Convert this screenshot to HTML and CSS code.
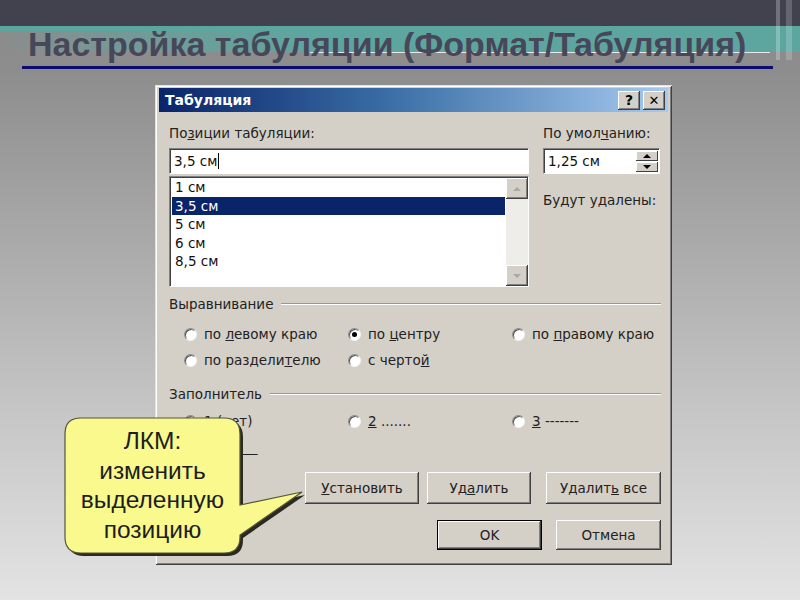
FILE: index.html
```html
<!DOCTYPE html>
<html lang="ru">
<head>
<meta charset="UTF-8">
<title>Настройка табуляции</title>
<link rel="stylesheet" href="styles.css">
</head>
<body>
<div class="slide">
    <div class="header">
        <h1 class="slide-title">Настройка табуляции (Формат/Табуляция)</h1>
    </div>

    <!-- Word dialog -->
    <div class="dialog">
        <div class="titlebar">
            <span class="caption">Табуляция</span>
            <div class="tb-buttons">
                <span class="tb-btn">?</span>
                <span class="tb-btn close">✕</span>
            </div>
        </div>

        <div class="dlg-body">
            <div class="top-grid">
                <div class="col-left">
                    <div class="lbl">По<u>з</u>иции табуляции:</div>
                    <div class="edit">3,5 см<span class="caret"></span></div>
                    <div class="listbox">
                        <ul class="items">
                            <li>1 см</li>
                            <li class="sel">3,5 см</li>
                            <li>5 см</li>
                            <li>6 см</li>
                            <li>8,5 см</li>
                        </ul>
                        <div class="vscroll">
                            <span class="sb-btn"><i class="arr up"></i></span>
                            <span class="sb-track"></span>
                            <span class="sb-btn"><i class="arr down"></i></span>
                        </div>
                    </div>
                </div>
                <div class="col-right">
                    <div class="lbl">По умол<u>ч</u>анию:</div>
                    <div class="edit spin">
                        <span>1,25 см</span>
                        <span class="spin-btns">
                            <span class="sp-btn"><i class="arr up dark"></i></span>
                            <span class="sp-btn"><i class="arr down dark"></i></span>
                        </span>
                    </div>
                    <div class="lbl removed">Будут удалены:</div>
                </div>
            </div>

            <div class="group-head">Выравнивание</div>
            <div class="radio-grid align">
                <label class="radio"><span class="dot"></span><span>по <u>л</u>евому краю</span></label>
                <label class="radio"><span class="dot on"></span><span>по <u>ц</u>ентру</span></label>
                <label class="radio"><span class="dot"></span><span>по <u>п</u>равому краю</span></label>
                <label class="radio"><span class="dot"></span><span>по раздели<u>т</u>елю</span></label>
                <label class="radio"><span class="dot"></span><span>с черто<u>й</u></span></label>
            </div>

            <div class="group-head fill-head">Заполнитель</div>
            <div class="radio-grid fill">
                <label class="radio"><span class="dot on"></span><span><u>1</u> (нет)</span></label>
                <label class="radio"><span class="dot"></span><span><u>2</u> .......</span></label>
                <label class="radio"><span class="dot"></span><span><u>3</u> -------</span></label>
                <label class="radio"><span class="dot"></span><span><u>4</u> ______</span></label>
            </div>

            <div class="btn-row first">
                <button class="btn w114"><u>У</u>становить</button>
                <button class="btn w104">Уд<u>а</u>лить</button>
                <button class="btn w115 spaced">Удалит<u>ь</u> все</button>
            </div>
            <div class="btn-row second">
                <button class="btn default w105">OK</button>
                <button class="btn w105">Отмена</button>
            </div>
        </div>
    </div>

    <!-- callout over the dialog -->
    <div class="callout">
        <svg class="callout-shape" width="250" height="150" viewBox="0 0 250 150">
            <path d="M21 5 H164 Q180 5 180 21 V92 L242 79 L180 122 V124 Q180 140 164 140 H21 Q5 140 5 124 V21 Q5 5 21 5 Z"
                  transform="translate(3,3)" fill="#2a2a22"/>
            <path d="M21 5 H164 Q180 5 180 21 V92 L242 79 L180 122 V124 Q180 140 164 140 H21 Q5 140 5 124 V21 Q5 5 21 5 Z"
                  fill="#f9f98e" stroke="#55553a" stroke-width="1.2"/>
        </svg>
        <div class="callout-text">ЛКМ:<br>изменить<br>выделенную<br>позицию</div>
    </div>
</div>
</body>
</html>
```

FILE: styles.css
```css
body {
  margin: 0;
  width: 800px;
  height: 600px;
  overflow: hidden;
  background: linear-gradient(#8a8a8a 0, #8d8d8d 70px, #c4c4c4 400px, #e3e3e3 600px);
  font-family: "DejaVu Sans", sans-serif;
  color: #111;
}

.slide {
  position: relative;
  height: 600px;
}

/* slide header */
.header {
  overflow: hidden;
  background:
    linear-gradient(rgba(255, 255, 255, 0.25), rgba(255, 255, 255, 0.25)) 776px 0 / 4px 60px no-repeat,
    linear-gradient(rgba(255, 255, 255, 0.18), rgba(255, 255, 255, 0.18)) 786px 0 / 6px 60px no-repeat,
    linear-gradient(#42424f, #42424f) 0 0 / 100% 26px no-repeat,
    linear-gradient(#5da6a0, #5da6a0) 0 26px / 100% 5px no-repeat,
    linear-gradient(to right, rgba(93, 166, 160, 0) 0, rgba(93, 166, 160, 0.6) 150px, #5da6a0 320px) 0 31px / 100% 21px no-repeat,
    linear-gradient(#e8e8e8, #e8e8e8) 310px 52px / 460px 1px no-repeat;
}
.slide-title {
  margin: 26px 27px 0 22px;
  padding: 0 0 4px 6px;
  font-family: "Liberation Sans", Arial, sans-serif;
  font-size: 34px;
  line-height: 36px;
  font-weight: bold;
  color: #474759;
  white-space: nowrap;
  border-bottom: 3px solid #0c0c6e;
}

/* dialog window */
.dialog {
  box-sizing: border-box;
  width: 517px;
  height: 480px;
  margin: 16px 0 0 155px;
  padding: 3px 4px;
  background: #d4d0c8;
  box-shadow: inset 1px 1px #e4e2dc, inset -1px -1px #404040, inset 2px 2px #fff, inset -2px -2px #808080;
  font-size: 13.5px;
}
.titlebar {
  height: 24px;
  display: flex;
  align-items: center;
  justify-content: space-between;
  padding: 0 3px 0 6px;
  background: linear-gradient(to right, #0a246a, #3a6ea5 45%, #a6caf0);
}
.caption {
  color: #fff;
  font-weight: bold;
  font-size: 14px;
}
.tb-buttons {
  display: flex;
  gap: 3px;
}
.tb-btn {
  width: 22px;
  height: 19px;
  box-sizing: border-box;
  background: #d4d0c8;
  box-shadow: inset -1px -1px #404040, inset 1px 1px #fff, inset -2px -2px #808080;
  display: flex;
  align-items: center;
  justify-content: center;
  font-weight: bold;
  font-size: 14px;
  color: #000;
}
.tb-btn.close {
  font-size: 13px;
}

.dlg-body {
  padding: 13px 7px 0 10px;
}
.top-grid {
  display: grid;
  grid-template-columns: 360px 117px;
  column-gap: 14px;
}
.lbl {
  line-height: 16px;
  margin-bottom: 7px;
  color: #222;
  white-space: nowrap;
}
.lbl.removed {
  margin-top: 18px;
}
.edit {
  box-sizing: border-box;
  height: 26px;
  padding: 0 4px;
  line-height: 24px;
  background: #fff;
  border: 1px solid;
  border-color: #808080 #fff #fff #808080;
  box-shadow: inset 1px 1px #404040;
  display: flex;
  align-items: center;
}
.caret {
  display: inline-block;
  width: 1px;
  height: 16px;
  background: #000;
  margin-left: 1px;
}
.edit.spin {
  justify-content: space-between;
  padding-right: 1px;
}
.spin-btns {
  display: flex;
  flex-direction: column;
  gap: 1px;
}
.sp-btn {
  width: 22px;
  height: 10px;
  background: #d4d0c8;
  box-shadow: inset -1px -1px #404040, inset 1px 1px #fff;
  display: flex;
  align-items: center;
  justify-content: center;
}

.listbox {
  box-sizing: border-box;
  margin-top: 2px;
  height: 111px;
  display: flex;
  background: #fff;
  border: 1px solid;
  border-color: #808080 #fff #fff #808080;
  box-shadow: inset 1px 1px #404040;
  padding: 1px 0 0 1px;
}
.items {
  flex: 1;
  list-style: none;
  margin: 0;
  padding: 0 1px 0 1px;
}
.items li {
  height: 18.5px;
  line-height: 18.5px;
  padding-left: 3px;
}
.items li.sel {
  background: #0a246a;
  color: #fff;
}
.vscroll {
  width: 22px;
  display: flex;
  flex-direction: column;
  background: #eeede9;
}
.sb-track {
  flex: 1;
}
.sb-btn {
  height: 21px;
  background: #d4d0c8;
  box-shadow: inset -1px -1px #404040, inset 1px 1px #fff, inset -2px -2px #808080;
  display: flex;
  align-items: center;
  justify-content: center;
}
.arr {
  width: 0;
  height: 0;
  border-left: 4px solid transparent;
  border-right: 4px solid transparent;
}
.arr.up {
  border-bottom: 4px solid #a8a8a8;
}
.arr.down {
  border-top: 4px solid #a8a8a8;
}
.arr.up.dark {
  border-bottom-color: #000;
}
.arr.down.dark {
  border-top-color: #000;
}

/* groups */
.group-head {
  display: flex;
  align-items: center;
  gap: 8px;
  margin-top: 9px;
  line-height: 16px;
  color: #222;
}
.group-head::after {
  content: "";
  flex: 1;
  border-top: 1px solid #9a978f;
  border-bottom: 1px solid #fff;
}
.fill-head {
  margin-top: 13px;
}
.radio-grid {
  display: grid;
  grid-template-columns: 164px 164px 1fr;
  grid-auto-rows: 26px;
  padding-left: 15px;
  margin-top: 9px;
}
.radio-grid.fill {
  margin-top: 6px;
}
.radio {
  display: flex;
  align-items: center;
  gap: 7px;
  color: #222;
  white-space: nowrap;
}
.dot {
  position: relative;
  box-sizing: border-box;
  flex: none;
  width: 13px;
  height: 13px;
  border-radius: 50%;
  background: #fff;
  border: 1px solid;
  border-color: #8a8a8a #f4f4f4 #f4f4f4 #8a8a8a;
  box-shadow: inset 1px 1px #505050;
}
.dot.on::after {
  content: "";
  position: absolute;
  left: 3px;
  top: 3px;
  width: 5px;
  height: 5px;
  border-radius: 50%;
  background: #000;
}

/* buttons */
.btn-row {
  display: flex;
  justify-content: flex-end;
  gap: 8px;
}
.btn-row.first {
  margin-top: 12px;
}
.btn-row.second {
  margin-top: 16px;
  gap: 14px;
}
.btn {
  box-sizing: border-box;
  height: 32px;
  padding: 0;
  border: none;
  background: #d4d0c8;
  font-family: "DejaVu Sans", sans-serif;
  font-size: 13.5px;
  color: #222;
  box-shadow: inset -1px -1px #404040, inset 1px 1px #fff, inset -2px -2px #808080;
}
.btn-row.second .btn {
  height: 30px;
}
.btn.default {
  border: 1px solid #000;
}
.btn.spaced {
  margin-left: 7px;
}
.w104 { width: 104px; }
.w105 { width: 105px; }
.w114 { width: 114px; }
.w115 { width: 115px; }

/* callout */
.callout {
  position: absolute;
  left: 60px;
  top: 413px;
  width: 250px;
  height: 150px;
}
.callout-shape {
  display: block;
}
.callout-text {
  position: absolute;
  left: 5px;
  top: 13px;
  width: 175px;
  text-align: center;
  font-family: "Liberation Sans", Arial, sans-serif;
  font-size: 24.5px;
  line-height: 29.5px;
  color: #1e1e1e;
}
```
